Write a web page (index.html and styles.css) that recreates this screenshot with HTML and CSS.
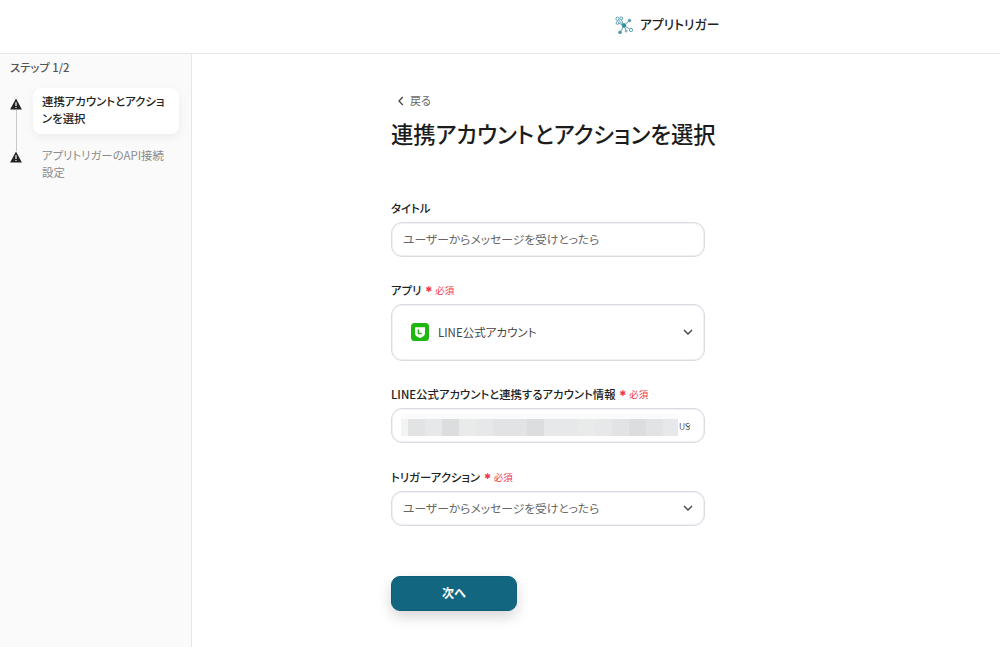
FILE: index.html
```html
<!DOCTYPE html>
<html lang="ja">
<head>
<meta charset="utf-8">
<title>連携アカウントとアクションを選択</title>
<link rel="stylesheet" href="styles.css">
</head>
<body>
<header class="topbar">
  <div class="brand">
    <svg class="brand-icon" viewBox="0 0 18 18" fill="none" stroke="#4f98ad" stroke-width=".9">
      <path d="M9 9.500 3 3.500M9 9.500 3.500 7M9 9.500 6 3M9 9.500 14 5M9 9.500 15.500 13.500M9 9.500 5.500 16M9 9.500 11 14.500"/>
      <circle cx="9" cy="9.500" r="1.900" fill="#2b8aa3"/>
      <circle cx="2.500" cy="2.800" r="1.600" fill="#fff"/>
      <circle cx="2.500" cy="7" r="1.400" fill="#fff"/>
      <circle cx="6.300" cy="2.200" r="1.400" fill="#fff"/>
      <circle cx="14.500" cy="4.500" r="1.200" fill="#4f98ad"/>
      <circle cx="16" cy="14" r="1.600" fill="#fff"/>
      <circle cx="5" cy="16.400" r="1.400" fill="#4f98ad"/>
      <circle cx="11.200" cy="15" r="1" fill="#fff"/>
    </svg>
    <span class="brand-name">アプリトリガー</span>
  </div>
</header>
<div class="layout">
  <aside class="sidebar">
    <p class="step-count">ステップ 1/2</p>
    <ol class="steps">
      <li class="step">
        <div class="rail rail-first">
          <svg class="warn" viewBox="0 0 12 12"><path d="M6 .6 11.900 11.400H.1Z" fill="#222"/><path d="M5.400 4.200h1.200v3.900H5.400zM5.400 8.900h1.200v1.200H5.400z" fill="#fff"/></svg>
          <span class="rail-line"></span>
        </div>
        <div class="step-card">連携アカウントとアクションを選択</div>
      </li>
      <li class="step">
        <div class="rail">
          <span class="rail-line rail-line-fixed"></span>
          <svg class="warn" viewBox="0 0 12 12"><path d="M6 .6 11.900 11.400H.1Z" fill="#222"/><path d="M5.400 4.200h1.200v3.900H5.400zM5.400 8.900h1.200v1.200H5.400z" fill="#fff"/></svg>
        </div>
        <div class="step-text">アプリトリガーのAPI接続設定</div>
      </li>
    </ol>
  </aside>
  <main class="main">
    <form class="form">
      <a class="back">
        <svg class="back-icon" viewBox="0 0 8 10" fill="none" stroke="#444" stroke-width="1.300"><path d="M5.800 1 2 5l3.800 4"/></svg>
        <span>戻る</span>
      </a>
      <h1 class="title">連携アカウントとアクションを選択</h1>

      <div class="label label-title">タイトル</div>
      <div class="field">ユーザーからメッセージを受けとったら</div>

      <div class="label"><span>アプリ</span><span class="req"><b class="star">✱</b>必須</span></div>
      <div class="field field-app">
        <svg class="line-icon" viewBox="0 0 18 18">
          <rect width="18" height="18" rx="3.500" fill="#1fb70f"/>
          <path d="M4 4.200h10v6.300c0 2-2.600 3.600-5 4.600-2.400-1-5-2.600-5-4.600Z" fill="#fff"/>
          <path d="M7.300 6.300v4.200h3.400" fill="none" stroke="#1fb70f" stroke-width="1.300"/>
        </svg>
        <span class="app-name">LINE公式アカウント</span>
        <svg class="chev" viewBox="0 0 10 6" fill="none" stroke="#444" stroke-width="1.400"><path d="M1 1l4 4 4-4"/></svg>
      </div>

      <div class="label"><span>LINE公式アカウントと連携するアカウント情報</span><span class="req"><b class="star">✱</b>必須</span></div>
      <div class="field field-account">
        <div class="masked">
          <div class="masked-top"></div>
          <div class="cells">
            <i class="cell cell-first"></i><i class="cell s2"></i><i class="cell s1"></i><i class="cell s3"></i><i class="cell s0"></i><i class="cell s1"></i><i class="cell s2"></i><i class="cell s2"></i><i class="cell s3"></i><i class="cell s1"></i><i class="cell s1"></i><i class="cell s0"></i><i class="cell s1"></i><i class="cell s2"></i><i class="cell s3"></i><i class="cell s2"></i><i class="cell cell-last s1"></i>
          </div>
        </div>
        <span class="account-tail">US</span>
        <svg class="chev chev-small" viewBox="0 0 10 6" fill="none" stroke="#444" stroke-width="1.400"><path d="M1 1l4 4 4-4"/></svg>
      </div>

      <div class="label label-trigger"><span>トリガーアクション</span><span class="req"><b class="star">✱</b>必須</span></div>
      <div class="field field-select">
        <span>ユーザーからメッセージを受けとったら</span>
        <svg class="chev" viewBox="0 0 10 6" fill="none" stroke="#444" stroke-width="1.400"><path d="M1 1l4 4 4-4"/></svg>
      </div>

      <button class="next" type="button">次へ</button>
    </form>
  </main>
</div>
</body>
</html>
```
FILE: styles.css
```css
* { box-sizing: border-box; }
html, body { margin: 0; height: 100%; }
body {
  font-family: "Noto Sans CJK JP", "Noto Sans", sans-serif;
  font-feature-settings: "palt";
  color: #222;
  background: #fff;
  overflow: hidden;
  display: flex;
  flex-direction: column;
  height: 647px;
}
.topbar {
  height: 54px;
  flex: none;
  border-bottom: 1px solid #e6e6e6;
  display: flex;
  align-items: center;
  padding-left: 615px;
  padding-bottom: 4px;
}
.brand { display: flex; align-items: center; gap: 7px; }
.brand-icon { width: 18px; height: 18px; }
.brand-name { font-size: 12.8px; font-weight: 500; color: #222; line-height: 18px; padding-bottom: 2px; }
.layout { flex: 1; display: flex; min-height: 0; }
.sidebar {
  width: 192px;
  flex: none;
  background: #fafafa;
  border-right: 1px solid #e6e6e6;
  padding: 5px 12px 0 10px;
}
.step-count {
  margin: 0 0 12px;
  font-size: 11.3px;
  line-height: 17px;
  font-weight: 500;
  color: #555;
}
.steps { list-style: none; margin: 0; padding: 0; }
.step { display: flex; gap: 11px; }
.rail { width: 12px; flex: none; display: flex; flex-direction: column; align-items: center; }
.rail-first { padding-top: 10px; }
.warn { width: 12px; height: 12px; flex: none; }
.rail-line { width: 1px; flex: 1; background: #c9c9c9; }
.rail-line-fixed { flex: none; height: 17px; }
.step-card {
  width: 146px;
  padding: 5px 10px 7px 9px;
  background: #fff;
  border-radius: 8px;
  box-shadow: 0 3px 10px rgba(0, 0, 0, .06);
  font-size: 11.4px;
  line-height: 17px;
  font-weight: 500;
  color: #222;
}
.step-text {
  width: 146px;
  padding: 13px 12px 0 9px;
  font-size: 11.4px;
  line-height: 17px;
  color: #8a8a8a;
}
.main { flex: 1; min-width: 0; padding: 38px 0 0 199px; }
.form { width: 314px; display: flex; flex-direction: column; }
.back {
  display: flex;
  align-items: center;
  gap: 5px;
  padding-left: 6px;
  padding-bottom: 2px;
  height: 18px;
  font-size: 11px;
  color: #666;
}
.back-icon { width: 8px; height: 10px; margin-top: 2px; }
.title {
  margin: 6px 0 0;
  font-size: 22.3px;
  line-height: 34px;
  font-weight: 500;
  color: #1c1c1c;
  white-space: nowrap;
}
.label {
  display: flex;
  align-items: center;
  gap: 4px;
  font-size: 11.4px;
  line-height: 16px;
  font-weight: 500;
  color: #222;
  margin: 25px 0 6px;
  height: 16px;
}
.label-title { margin-top: 50px; }
.label-trigger { margin-top: 26px; }
.req { display: flex; align-items: center; font-size: 9.5px; color: #f0384f; gap: 3px; font-weight: 400; }
.star { font-family: "DejaVu Sans", sans-serif; font-size: 8px; font-weight: 400; line-height: 16px; }
.field {
  height: 35px;
  border: 1px solid #d9dbe1;
  box-shadow: 0 0 0 1px #f0f1f4 inset;
  border-radius: 11px;
  background: #fff;
  display: flex;
  align-items: center;
  padding: 0 11px 2px 11px;
  font-size: 11.8px;
  color: #666;
}
.field-app { height: 57px; padding: 0 11px 2px 19px; color: #444; font-size: 11.5px; }
.line-icon { width: 18px; height: 18px; flex: none; margin-right: 9px; }
.app-name { flex: 1; }
.chev { width: 10px; height: 6px; flex: none; margin-left: auto; }
.field-account { padding: 0 12px 0 9px; }
.masked { width: 277px; height: 22px; flex: none; display: flex; flex-direction: column; margin-top: -1px; }
.masked-top { height: 5px; background: #fbfbfb; }
.cells { display: flex; height: 17px; }
.cell { width: 17px; flex: none; display: block; }
.cell-first { width: 7px; background: #f2f3f3; }
.cell-last { width: 15px; }
.s0 { background: #e9ebea; }
.s1 { background: #e7e8e9; }
.s2 { background: #e2e3e5; }
.s3 { background: #dcdddf; }
.account-tail { font-size: 8.5px; color: #555; margin-left: 1px; }
.chev-small { width: 6px; height: 4px; margin-left: -5px; }
.next {
  align-self: flex-start;
  margin-top: 50px;
  width: 126px;
  height: 34.5px;
  border: 1px solid #0f5e78;
  border-radius: 9px;
  background: #136680;
  color: #fff;
  font-family: inherit;
  font-size: 12px;
  font-weight: 700;
  padding-bottom: 3px;
  box-shadow: 0 6px 14px rgba(0, 0, 0, .16);
}
```
